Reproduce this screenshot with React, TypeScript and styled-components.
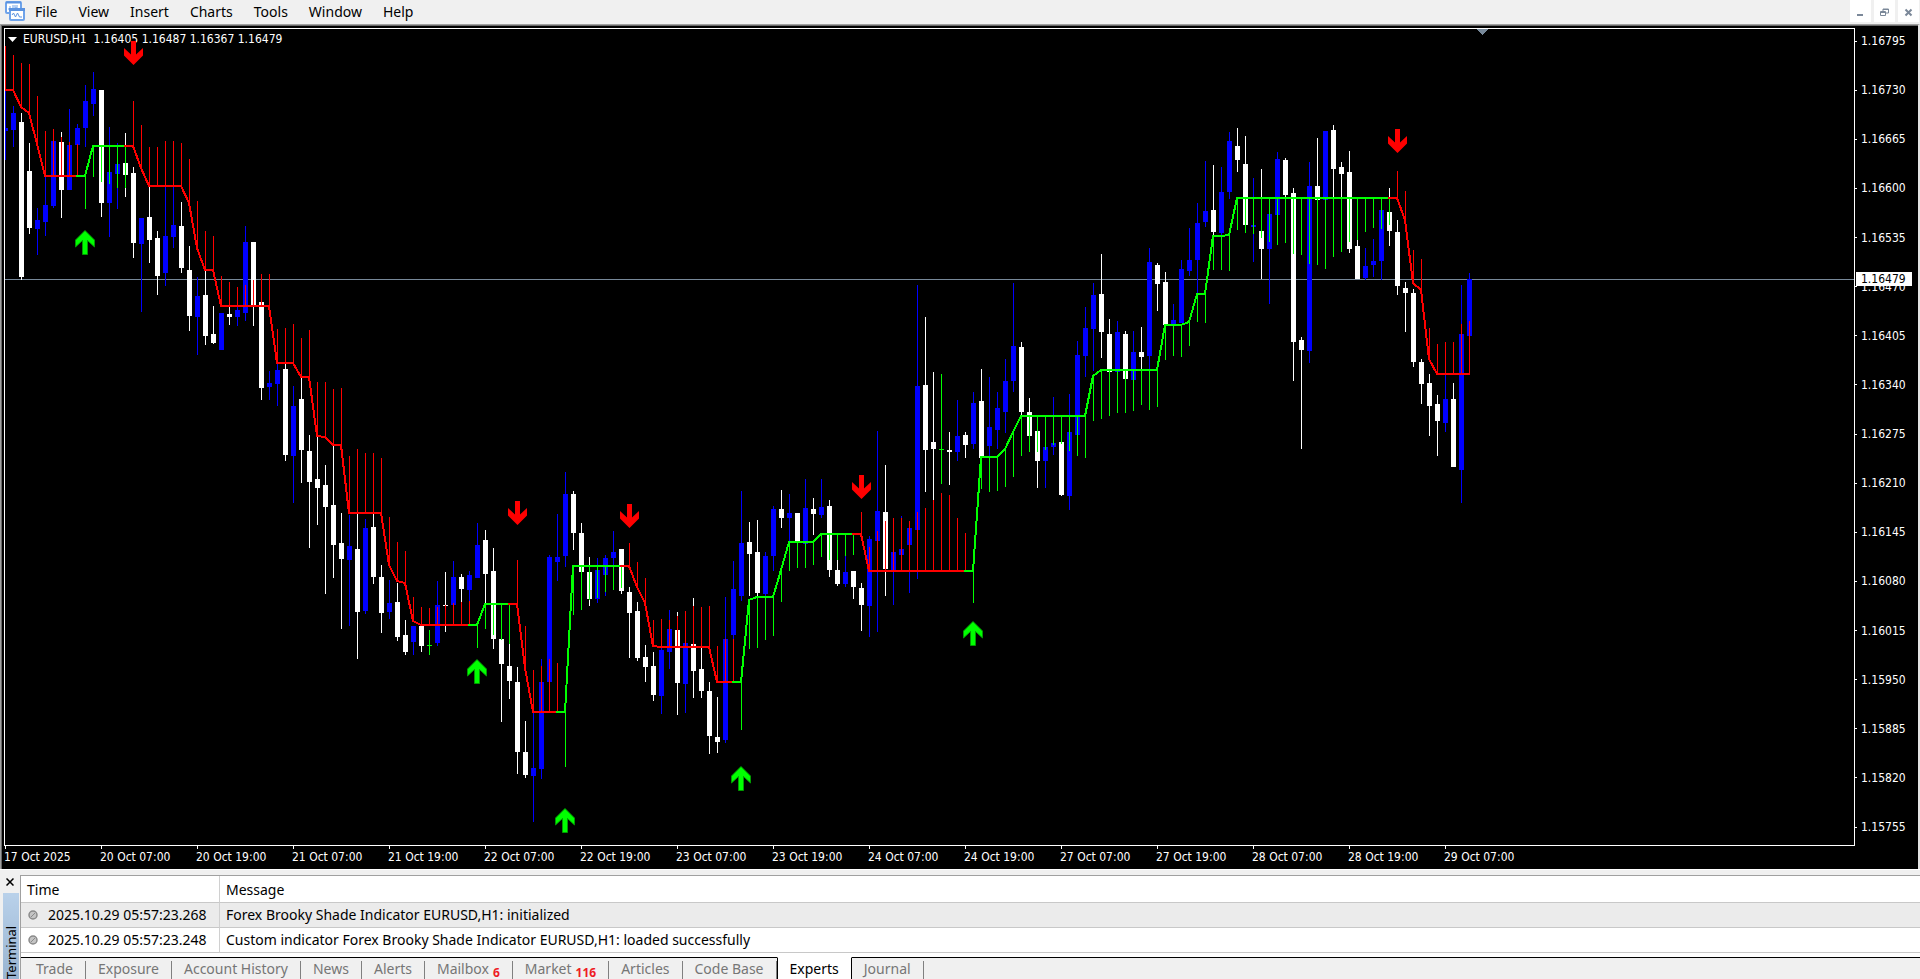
import React from "react";
import styled, { createGlobalStyle, css } from "styled-components";

const GlobalStyle = createGlobalStyle`
  * { box-sizing: border-box; }
  body { margin: 0; background: #f0f0f0; font-family: "Noto Sans", "Open Sans", sans-serif; }
  button { font: inherit; border: 0; background: none; padding: 0; color: inherit; }
`;

/* ---------- data ---------- */

type Tone = "b" | "w" | "g";
type Trend = "r" | "g";
// tone, high, top, bottom, low, trend, trend line level, shade end
type Bar = [Tone, number, number, number, number, Trend, number, number];

const BARS: Bar[] = [
  ["b", 90, 128, 131, 160, "r", 90, 46],
  ["b", 106, 113, 130, 147, "r", 90, 55],
  ["w", 113, 122, 277, 280, "r", 107, 63],
  ["w", 143, 171, 228, 234, "r", 113, 64],
  ["b", 208, 220, 229, 255, "r", 144, 96],
  ["b", 177, 205, 222, 236, "r", 176, 131],
  ["b", 141, 141, 206, 208, "r", 176, 129],
  ["w", 132, 142, 190, 218, "r", 176, 137],
  ["b", 109, 145, 190, 190, "r", 176, 142],
  ["b", 124, 128, 145, 145, "r", 176, 144],
  ["b", 85, 101, 128, 147, "g", 176, 209],
  ["b", 72, 89, 104, 116, "g", 146, 177],
  ["w", 90, 90, 203, 217, "g", 146, 182],
  ["b", 127, 172, 203, 237, "g", 146, 184],
  ["b", 143, 164, 174, 209, "g", 146, 188],
  ["w", 133, 163, 175, 197, "g", 146, 188],
  ["w", 167, 173, 243, 258, "r", 146, 101],
  ["b", 218, 218, 244, 312, "r", 168, 125],
  ["w", 186, 217, 240, 263, "r", 186, 147],
  ["w", 231, 238, 276, 295, "r", 186, 147],
  ["b", 186, 236, 273, 286, "r", 186, 141],
  ["b", 186, 225, 237, 248, "r", 186, 141],
  ["w", 202, 226, 268, 273, "r", 186, 143],
  ["w", 246, 270, 316, 331, "r", 203, 159],
  ["b", 277, 296, 317, 355, "r", 248, 201],
  ["w", 270, 295, 336, 345, "r", 270, 231],
  ["w", 306, 334, 343, 344, "r", 270, 236],
  ["b", 313, 313, 350, 350, "r", 306, 276],
  ["w", 306, 314, 317, 325, "r", 306, 282],
  ["b", 307, 310, 317, 326, "r", 306, 287],
  ["b", 226, 242, 313, 321, "r", 306, 285],
  ["w", 242, 242, 305, 326, "r", 306, 280],
  ["w", 302, 302, 388, 400, "r", 306, 274],
  ["b", 371, 383, 387, 400, "r", 306, 274],
  ["b", 363, 370, 384, 406, "r", 363, 329],
  ["w", 363, 369, 455, 461, "r", 363, 328],
  ["b", 386, 406, 456, 503, "r", 363, 324],
  ["w", 377, 399, 450, 483, "r", 377, 338],
  ["w", 435, 451, 482, 548, "r", 377, 330],
  ["w", 436, 479, 488, 525, "r", 436, 382],
  ["w", 465, 485, 507, 594, "r", 437, 382],
  ["w", 445, 505, 545, 578, "r", 445, 389],
  ["w", 513, 543, 559, 629, "r", 445, 388],
  ["b", 515, 546, 560, 626, "r", 513, 456],
  ["w", 513, 549, 612, 659, "r", 513, 449],
  ["b", 519, 528, 611, 614, "r", 513, 453],
  ["w", 513, 527, 577, 584, "r", 513, 453],
  ["w", 565, 577, 613, 633, "r", 513, 458],
  ["b", 580, 603, 612, 619, "r", 565, 517],
  ["w", 583, 602, 637, 641, "r", 581, 542],
  ["w", 620, 635, 652, 655, "r", 583, 551],
  ["b", 626, 626, 642, 655, "r", 621, 597],
  ["w", 625, 626, 646, 652, "r", 625, 607],
  ["g", 630, 645, 646, 655, "r", 625, 608],
  ["b", 581, 605, 643, 646, "r", 625, 607],
  ["w", 572, 605, 606, 632, "r", 625, 605],
  ["b", 561, 577, 605, 605, "r", 625, 603],
  ["w", 574, 577, 589, 602, "r", 625, 602],
  ["b", 571, 575, 590, 601, "r", 625, 601],
  ["b", 523, 545, 578, 578, "g", 625, 648],
  ["w", 530, 540, 574, 604, "g", 604, 629],
  ["w", 548, 571, 639, 649, "g", 604, 635],
  ["w", 639, 639, 664, 722, "g", 604, 640],
  ["w", 644, 666, 681, 699, "g", 604, 644],
  ["w", 667, 682, 752, 774, "r", 604, 560],
  ["w", 721, 752, 775, 778, "r", 668, 626],
  ["b", 713, 768, 776, 822, "r", 712, 670],
  ["b", 659, 682, 769, 779, "r", 712, 666],
  ["b", 555, 557, 682, 682, "r", 712, 659],
  ["b", 514, 557, 562, 581, "r", 712, 663],
  ["b", 472, 494, 556, 567, "g", 712, 767],
  ["w", 491, 494, 533, 550, "g", 566, 615],
  ["w", 523, 533, 572, 572, "g", 566, 610],
  ["w", 557, 572, 599, 606, "g", 566, 600],
  ["b", 558, 570, 599, 603, "g", 566, 598],
  ["b", 555, 558, 575, 596, "g", 566, 592],
  ["b", 531, 552, 558, 566, "g", 566, 590],
  ["w", 549, 549, 591, 594, "g", 566, 588],
  ["w", 587, 592, 613, 658, "r", 566, 543],
  ["w", 602, 611, 658, 661, "r", 587, 562],
  ["w", 645, 657, 667, 682, "r", 603, 578],
  ["w", 652, 666, 695, 701, "r", 646, 620],
  ["b", 647, 650, 696, 714, "r", 647, 619],
  ["b", 610, 629, 652, 669, "r", 647, 620],
  ["w", 612, 630, 683, 715, "r", 647, 616],
  ["b", 643, 643, 684, 713, "r", 647, 611],
  ["w", 598, 644, 671, 698, "r", 647, 606],
  ["w", 648, 669, 691, 698, "r", 647, 607],
  ["w", 682, 691, 736, 754, "r", 647, 606],
  ["w", 697, 737, 742, 753, "r", 682, 646],
  ["b", 597, 639, 740, 743, "r", 682, 639],
  ["b", 561, 589, 635, 639, "r", 682, 639],
  ["b", 491, 543, 596, 601, "g", 682, 730],
  ["w", 522, 542, 554, 596, "g", 600, 649],
  ["w", 520, 552, 593, 597, "g", 597, 648],
  ["b", 552, 556, 594, 597, "g", 597, 640],
  ["b", 506, 509, 556, 571, "g", 597, 636],
  ["w", 490, 509, 518, 528, "g", 570, 602],
  ["b", 494, 513, 518, 541, "g", 542, 571],
  ["w", 513, 513, 541, 541, "g", 542, 568],
  ["b", 479, 508, 544, 544, "g", 542, 568],
  ["w", 498, 509, 514, 535, "g", 542, 565],
  ["b", 479, 507, 515, 518, "g", 534, 557],
  ["w", 500, 506, 570, 577, "g", 534, 560],
  ["w", 560, 570, 584, 586, "g", 534, 560],
  ["b", 556, 572, 584, 587, "g", 534, 556],
  ["w", 571, 571, 587, 599, "g", 534, 555],
  ["w", 583, 588, 605, 631, "r", 534, 512],
  ["b", 536, 539, 606, 637, "r", 571, 547],
  ["b", 431, 511, 541, 632, "r", 571, 531],
  ["w", 465, 512, 569, 596, "r", 571, 521],
  ["b", 552, 552, 571, 605, "r", 571, 518],
  ["b", 516, 549, 555, 555, "r", 571, 518],
  ["b", 528, 528, 545, 593, "r", 571, 521],
  ["b", 285, 386, 530, 579, "r", 571, 512],
  ["w", 317, 385, 450, 492, "r", 571, 508],
  ["w", 372, 442, 449, 500, "r", 571, 500],
  ["g", 374, 449, 450, 484, "r", 571, 493],
  ["w", 432, 450, 452, 485, "r", 571, 495],
  ["b", 400, 436, 452, 461, "r", 571, 518],
  ["w", 432, 435, 445, 458, "r", 571, 533],
  ["b", 392, 403, 444, 449, "g", 571, 603],
  ["w", 369, 401, 458, 458, "g", 457, 489],
  ["b", 377, 427, 446, 456, "g", 457, 492],
  ["b", 392, 408, 430, 449, "g", 457, 491],
  ["b", 359, 381, 412, 433, "g", 449, 487],
  ["b", 283, 346, 381, 392, "g", 432, 477],
  ["w", 342, 347, 412, 416, "g", 416, 456],
  ["w", 398, 412, 436, 436, "g", 416, 452],
  ["w", 431, 431, 461, 488, "g", 416, 452],
  ["b", 447, 447, 461, 488, "g", 416, 450],
  ["b", 397, 443, 447, 455, "g", 416, 445],
  ["w", 442, 442, 495, 496, "g", 416, 444],
  ["b", 394, 432, 496, 510, "g", 416, 451],
  ["b", 341, 355, 435, 435, "g", 416, 456],
  ["b", 307, 328, 356, 377, "g", 416, 458],
  ["b", 283, 295, 329, 371, "g", 376, 421],
  ["w", 254, 294, 332, 358, "g", 370, 419],
  ["w", 319, 334, 372, 372, "g", 370, 416],
  ["b", 321, 332, 372, 372, "g", 370, 413],
  ["w", 331, 334, 379, 379, "g", 370, 413],
  ["b", 331, 352, 380, 380, "g", 370, 411],
  ["w", 327, 352, 357, 369, "g", 370, 405],
  ["b", 248, 262, 356, 369, "g", 370, 410],
  ["w", 263, 265, 284, 311, "g", 370, 407],
  ["w", 272, 282, 325, 325, "g", 325, 360],
  ["b", 304, 320, 324, 324, "g", 325, 356],
  ["b", 260, 269, 323, 323, "g", 325, 357],
  ["b", 228, 260, 271, 276, "g", 322, 346],
  ["b", 203, 223, 260, 293, "g", 294, 322],
  ["b", 161, 211, 222, 227, "g", 294, 323],
  ["w", 165, 210, 232, 236, "g", 236, 270],
  ["b", 167, 192, 233, 235, "g", 236, 270],
  ["b", 132, 141, 192, 199, "g", 235, 271],
  ["w", 128, 146, 160, 172, "g", 198, 230],
  ["w", 136, 164, 225, 225, "g", 198, 233],
  ["b", 178, 225, 227, 262, "g", 198, 234],
  ["w", 169, 231, 249, 279, "g", 198, 238],
  ["b", 214, 214, 249, 304, "g", 198, 242],
  ["b", 152, 159, 215, 215, "g", 198, 245],
  ["w", 158, 160, 195, 197, "g", 198, 243],
  ["w", 188, 193, 342, 381, "g", 198, 254],
  ["w", 337, 340, 350, 449, "g", 198, 255],
  ["b", 162, 186, 351, 363, "g", 198, 264],
  ["w", 138, 186, 200, 200, "g", 198, 265],
  ["b", 131, 131, 200, 200, "g", 198, 269],
  ["w", 125, 130, 169, 197, "g", 198, 257],
  ["w", 162, 167, 174, 197, "g", 198, 252],
  ["w", 151, 172, 249, 253, "g", 198, 242],
  ["w", 240, 246, 279, 279, "g", 198, 240],
  ["b", 248, 266, 278, 280, "g", 198, 232],
  ["b", 239, 261, 265, 277, "g", 198, 228],
  ["b", 210, 210, 261, 280, "g", 198, 229],
  ["w", 188, 212, 231, 246, "g", 198, 225],
  ["w", 220, 232, 286, 295, "r", 198, 171],
  ["w", 282, 288, 293, 332, "r", 220, 191],
  ["w", 289, 293, 362, 367, "r", 283, 250],
  ["w", 359, 362, 384, 404, "r", 290, 259],
  ["w", 374, 383, 406, 436, "r", 359, 328],
  ["w", 395, 404, 421, 456, "r", 374, 344],
  ["b", 375, 399, 423, 432, "r", 374, 342],
  ["w", 383, 399, 467, 467, "r", 374, 342],
  ["b", 285, 334, 470, 503, "r", 374, 324],
  ["b", 273, 279, 336, 336, "r", 374, 321],
];

const TONES: Record<Tone, string> = { b: "#0000ff", w: "#ffffff", g: "#00ff00" };
const TRENDS: Record<Trend, string> = { r: "#ff0000", g: "#00ff00" };

// bar index, top of the arrow
const SELLS = [[16, 41], [64, 501], [78, 504], [107, 475], [174, 129]];
const BUYS = [[10, 230], [59, 659], [70, 808], [92, 766], [121, 621]];

const PRICES = Array.from({ length: 17 }, (_, i) => (1.16795 - i * 0.00065).toFixed(5));

const TIMES = [
  "17 Oct 2025", "20 Oct 07:00", "20 Oct 19:00", "21 Oct 07:00", "21 Oct 19:00",
  "22 Oct 07:00", "22 Oct 19:00", "23 Oct 07:00", "23 Oct 19:00", "24 Oct 07:00",
  "24 Oct 19:00", "27 Oct 07:00", "27 Oct 19:00", "28 Oct 07:00", "28 Oct 19:00",
  "29 Oct 07:00",
];

const MENUS = ["File", "View", "Insert", "Charts", "Tools", "Window", "Help"];

const LOG = [
  ["2025.10.29 05:57:23.268", "Forex Brooky Shade Indicator EURUSD,H1: initialized"],
  ["2025.10.29 05:57:23.248", "Custom indicator Forex Brooky Shade Indicator EURUSD,H1: loaded successfully"],
];

const TABS: { name: string; count?: number; active?: boolean }[] = [
  { name: "Trade" }, { name: "Exposure" }, { name: "Account History" }, { name: "News" },
  { name: "Alerts" }, { name: "Mailbox", count: 6 }, { name: "Market", count: 116 },
  { name: "Articles" }, { name: "Code Base" }, { name: "Experts", active: true }, { name: "Journal" },
];

/* ---------- styles ---------- */

const Shell = styled.div`
  display: flex;
  flex-direction: column;
  height: 100vh;
  overflow: hidden;
  color: #000;
`;

const MenuBar = styled.header`
  display: flex;
  align-items: flex-start;
  height: 24px;
  padding: 0 1px 0 5px;
  background: #f0f0f0;
`;

const Logo = styled.svg`
  width: 20px;
  height: 20px;
  margin-top: 1px;
`;

const MenuList = styled.nav`
  display: flex;
  flex: 1;
`;

const MenuItem = styled.button`
  padding: 0 11px 0 10px;
  font-size: 14px;
  line-height: 24px;
`;

const WindowButtons = styled.div`
  display: flex;
  gap: 3px;
`;

const WindowButton = styled.button`
  display: grid;
  place-items: center;
  width: 21px;
  height: 22px;
  padding-top: 2px;
  background: #fff;
  svg { width: 9px; height: 9px; }
`;

const ChartWindow = styled.main`
  flex: 1;
  display: grid;
  grid-template-columns: 1fr 63px;
  grid-template-rows: 1fr 23px;
  min-height: 0;
  padding: 3px 0 0 3px;
  background: #000;
  border: solid #a0a0a0;
  border-width: 1px 2px 0 1px;
  border-right-color: #e3e3e3;
  box-shadow: inset 1px 1px 0 #696969;
  color: #fff;
  font-family: "DejaVu Sans Condensed", "Noto Sans", sans-serif;
  font-size: 12px;
`;

const Plot = styled.section`
  position: relative;
  border: 1px solid #fff;
`;

const ChartTitle = styled.h1`
  position: absolute;
  top: 2px;
  left: 3px;
  display: flex;
  align-items: center;
  gap: 6px;
  margin: 0;
  font-size: 12px;
  font-weight: 400;
  line-height: 16px;
  white-space: pre;
  svg { width: 9px; height: 5px; }
`;

const Drawing = styled.svg`
  position: absolute;
  inset: 0;
  width: 100%;
  height: 100%;
`;

const PriceAxis = styled.ol`
  position: relative;
  display: flex;
  flex-direction: column;
  justify-content: space-between;
  margin: 0;
  padding: 5px 0 11px;
  list-style: none;
`;

const PriceMark = styled.li`
  display: flex;
  align-items: center;
  gap: 4px;
  line-height: 16px;
  &::before { content: ""; width: 2px; height: 1px; background: #fff; }
`;

const CurrentPrice = styled.li`
  position: absolute;
  top: 244px;
  left: 1px;
  width: 56px;
  padding-left: 5px;
  background: #fff;
  color: #000;
  line-height: 14px;
`;

const TimeAxis = styled.ol`
  grid-column: 1 / -1;
  display: flex;
  margin: 0;
  padding: 0;
  list-style: none;
  overflow: hidden;
`;

const TimeMark = styled.li`
  flex: 0 0 96px;
  line-height: 16px;
  white-space: nowrap;
  &::before { content: ""; display: block; width: 1px; height: 3px; margin-left: 1px; background: #fff; }
`;

const Terminal = styled.section`
  display: flex;
  border-top: 1px solid #fff;
  padding-top: 5px;
`;

const Side = styled.aside`
  display: flex;
  flex-direction: column;
  width: 20px;
  padding: 2px 1px 0 3px;
`;

const CloseButton = styled.button`
  display: grid;
  place-items: center;
  width: 14px;
  height: 10px;
  svg { width: 8px; height: 8px; }
`;

const SideLabel = styled.div`
  flex: 1;
  height: 0;
  margin-top: 6px;
  background: linear-gradient(#99b4d1, #b9d1ea);
  writing-mode: vertical-rl;
  transform: rotate(180deg);
  font-size: 13px;
  line-height: 16px;
  white-space: nowrap;
`;

const Panel = styled.div`
  flex: 1;
  min-width: 0;
  background: #fff;
  border: solid #a0a0a0;
  border-width: 1px 0 0 1px;
`;

const LogTable = styled.table`
  width: 100%;
  margin-bottom: 4px;
  border-collapse: separate;
  border-spacing: 0;
  table-layout: fixed;
  font-size: 14px;
  line-height: 23px;
  th, td { padding: 0 6px 1px; border-bottom: 1px solid #c8c8c8; text-align: left; font-weight: 400; white-space: nowrap; }
  th { padding: 2px 6px 1px; }
  th:first-child, td:first-child { width: 199px; border-right: 1px solid #d0d0d0; }
`;

const LogRow = styled.tr<{ $shaded: boolean }>`
  background: ${(p) => (p.$shaded ? "#ebebeb" : "#fff")};
  svg { width: 10px; height: 10px; margin: 0 10px 0 1px; }
`;

const TabList = styled.div`
  display: flex;
  height: 22px;
  background: #f0f0f0;
`;

const Tab = styled.button<{ $active?: boolean }>`
  position: relative;
  display: flex;
  align-items: center;
  padding: 0 12px;
  border-top: 1px solid #000;
  color: #767676;
  font-size: 14px;
  line-height: 20px;
  white-space: nowrap;
  &:first-child { padding-left: 15px; }
  &::after {
    content: "";
    align-self: flex-end;
    width: 1px;
    height: 18px;
    margin: 0 -12px 0 12px;
    background: #808080;
  }
  ${(p) =>
    p.$active &&
    css`
      border-top-color: #fff;
      background: #fff;
      color: #000;
      border-right: 1px solid #000;
      border-left: 1px solid #000;
      &::after { display: none; }
    `}
`;

const Count = styled.sup`
  align-self: flex-end;
  margin: 0 0 0 4px;
  color: #ee1c25;
  font-size: 12px;
  font-weight: 700;
  line-height: 12px;
`;

const TabRest = styled.div`
  flex: 1;
  border-top: 1px solid #000;
`;

/* ---------- drawing ---------- */

const barX = (i: number) => 5 + i * 8;

function Candle({ bar, x }: { bar: Bar; x: number }) {
  const [tone, high, top, bottom, low] = bar;
  return (
    <g fill={TONES[tone]}>
      <rect x={x} y={high} width={1} height={low - high} />
      <rect x={x - 2} y={top} width={5} height={bottom - top} />
    </g>
  );
}

function Shade({ bar, x }: { bar: Bar; x: number }) {
  const [, , , , , trend, level, end] = bar;
  return (
    <rect x={x} y={Math.min(level, end)} width={1} height={Math.abs(end - level)} fill={TRENDS[trend]} />
  );
}

function PriceChart() {
  return (
    <Drawing role="img" aria-label="EURUSD hourly candles">
      <g transform="translate(-5 -29)" shapeRendering="crispEdges">
        <rect x={5} y={279} width="100%" height={1} fill="#778899" />
        {BARS.map((bar, i) => <Candle key={i} bar={bar} x={barX(i)} />)}
        {BARS.map((bar, i) => <Shade key={i} bar={bar} x={barX(i)} />)}
        {BARS.slice(1).map((bar, i) => (
          <line
            key={i}
            x1={barX(i)}
            y1={BARS[i][6]}
            x2={barX(i + 1)}
            y2={bar[6]}
            stroke={TRENDS[bar[5]]}
            strokeWidth={2}
            strokeLinecap="square"
          />
        ))}
        <path d="M1477 29h11l-5.500 6z" fill="#778899" />
      </g>
      <g transform="translate(-5 -29)">
        {SELLS.map(([i, y]) => (
          <path
            key={i}
            transform={`translate(${barX(i)} ${y})`}
            d="M-2 0H3V13.500L10 7V14.500L.5 24-9 14.500V7L-2 13.500z"
            fill="#ff0000"
          />
        ))}
        {BUYS.map(([i, y]) => (
          <path
            key={i}
            transform={`translate(${barX(i)} ${y})`}
            d="M0 .5L9.500 10V17L2.500 10.500V24.500H-2.500V10.500L-9.500 17V10z"
            fill="#00ff00"
            stroke="#009a00"
            strokeWidth={1}
          />
        ))}
      </g>
    </Drawing>
  );
}

function LogoIcon() {
  return (
    <Logo viewBox="0 0 20 20" fill="none" aria-hidden="true">
      <rect x="1" y="1" width="15" height="11" rx="1" fill="#fff" stroke="#6fa3ea" strokeWidth="2" />
      <path d="M1 1.500h15" stroke="#5a92e0" strokeWidth="2" />
      <path d="M3 8h2V5M6 8h2V4M10 4v3h2V4" stroke="#6fa3ea" />
      <rect x="5" y="8" width="14" height="11" rx="1" fill="#fff" stroke="#6fa3ea" strokeWidth="2" />
      <path d="M4 8.500h16" stroke="#5a92e0" strokeWidth="3" />
      <path d="M7 14l1.500-2 2 4 2-4 2 4h2.500" stroke="#5a92e0" />
    </Logo>
  );
}

export default function App() {
  return (
    <Shell>
      <GlobalStyle />
      <MenuBar>
        <LogoIcon />
        <MenuList aria-label="Main menu">
          {MENUS.map((name) => <MenuItem key={name}>{name}</MenuItem>)}
        </MenuList>
        <WindowButtons>
          <WindowButton aria-label="Minimize">
            <svg viewBox="0 0 9 9"><path d="M1 6h6v2H1z" fill="#7b8899" /></svg>
          </WindowButton>
          <WindowButton aria-label="Restore">
            <svg viewBox="0 0 9 9" fill="none" stroke="#7b8899"><path d="M3 3V1h5.500v4H6M3 1.500h5.500M.5 3.500h5v4h-5zM.5 4.500h5" /></svg>
          </WindowButton>
          <WindowButton aria-label="Close">
            <svg viewBox="0 0 9 9" stroke="#7b8899" strokeWidth="2"><path d="M1.500 1.500l6 6M7.500 1.500l-6 6" /></svg>
          </WindowButton>
        </WindowButtons>
      </MenuBar>

      <ChartWindow>
        <Plot>
          <ChartTitle>
            <svg viewBox="0 0 9 5" aria-hidden="true"><path d="M0 0h9L4.500 5z" fill="#fff" /></svg>
            {"EURUSD,H1  1.16405 1.16487 1.16367 1.16479"}
          </ChartTitle>
          <PriceChart />
        </Plot>
        <PriceAxis>
          {PRICES.map((price) => <PriceMark key={price}>{price}</PriceMark>)}
          <CurrentPrice>1.16479</CurrentPrice>
        </PriceAxis>
        <TimeAxis>
          {TIMES.map((time) => <TimeMark key={time}>{time}</TimeMark>)}
        </TimeAxis>
      </ChartWindow>

      <Terminal aria-label="Terminal">
        <Side>
          <CloseButton aria-label="Close terminal">
            <svg viewBox="0 0 8 8" stroke="#000" strokeWidth="1.500"><path d="M.5.5l7 7M7.500.5l-7 7" /></svg>
          </CloseButton>
          <SideLabel>Terminal</SideLabel>
        </Side>
        <Panel>
          <LogTable>
            <thead>
              <tr><th scope="col">Time</th><th scope="col">Message</th></tr>
            </thead>
            <tbody>
              {LOG.map(([time, message], i) => (
                <LogRow key={time} $shaded={i === 0}>
                  <td>
                    <svg viewBox="0 0 10 10" aria-hidden="true">
                      <circle cx="5" cy="5" r="4" fill="#c4c4c4" stroke="#8a8a8a" strokeWidth="1.500" />
                      <path d="M3 7l4-4" stroke="#8a8a8a" />
                    </svg>
                    {time}
                  </td>
                  <td>{message}</td>
                </LogRow>
              ))}
            </tbody>
          </LogTable>
          <TabList role="tablist">
            {TABS.map(({ name, count, active }) => (
              <Tab key={name} role="tab" aria-selected={!!active} $active={active}>
                {name}
                {count && <Count>{count}</Count>}
              </Tab>
            ))}
            <TabRest />
          </TabList>
        </Panel>
      </Terminal>
    </Shell>
  );
}
